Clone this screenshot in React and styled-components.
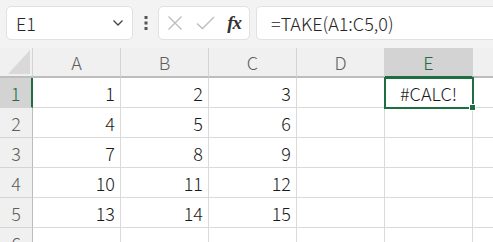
import React from 'react';
import styled, { createGlobalStyle } from 'styled-components';

const GlobalStyle = createGlobalStyle`
  html, body {
    margin: 0;
    padding: 0;
    background: #ffffff;
    font-family: "Noto Sans CJK JP", "Noto Sans", sans-serif;
    font-weight: 300;
  }
`;

const green = '#1e6e42';

const Page = styled.div`
  width: 493px;
  height: 242px;
  overflow: hidden;
  background: #f3f3f3;
`;

const Toolbar = styled.div`
  height: 48px;
  box-sizing: border-box;
  display: flex;
  align-items: flex-start;
  padding: 6px 0 0 6px;
`;

const Box = styled.div`
  height: 34px;
  box-sizing: border-box;
  background: #ffffff;
  border: 1px solid #e1e1e1;
  border-radius: 5px;
  display: flex;
  align-items: center;
`;

const NameBox = styled(Box)`
  width: 127px;
  padding: 0 8px 0 9px;
  justify-content: space-between;
  font-size: 18px;
  color: #262626;
`;

const Dots = styled.div`
  width: 25px;
  display: flex;
  justify-content: center;
  align-items: center;
  height: 34px;
`;

const IconBox = styled(Box)`
  width: 92px;
  padding: 0 6px 0 8px;
  justify-content: space-between;
`;

const Fx = styled.span`
  font-family: "Liberation Serif", "DejaVu Serif", serif;
  font-style: italic;
  font-weight: bold;
  font-size: 19px;
  color: #333;
  letter-spacing: -1px;
  margin-right: 2px;
`;

const FormulaBox = styled(Box)`
  flex: 1;
  margin-left: 6px;
  border-right: none;
  border-radius: 5px 0 0 5px;
  padding-left: 14px;
  font-size: 18px;
  color: #262626;
`;

const Sheet = styled.div`
  display: grid;
  grid-template-columns: 33px repeat(6, 88px);
  grid-auto-rows: 30px;
  background: #ffffff;
`;

const Cell = styled.div`
  box-sizing: border-box;
  border-right: 1px solid #dadada;
  border-bottom: 1px solid #dadada;
  display: flex;
  align-items: center;
  justify-content: flex-end;
  padding-right: 5px;
  font-size: 18px;
  color: #1a1a1a;
`;

const Selected = styled(Cell)`
  position: relative;
  justify-content: center;
  padding: 0;
  outline: 2px solid ${green};
  outline-offset: -1px;
  z-index: 1;

  &::after {
    content: '';
    position: absolute;
    right: -4px;
    bottom: -4px;
    width: 5px;
    height: 5px;
    background: ${green};
    border: 1px solid #fff;
  }
`;

const ColHead = styled.div`
  box-sizing: border-box;
  background: ${(p) => (p.$active ? '#d3d3d3' : '#f0f0f0')};
  border-right: 1px solid #d4d4d4;
  border-bottom: ${(p) => (p.$active ? `2px solid ${green}` : '2px solid #bdbdbd')};
  color: ${(p) => (p.$active ? green : '#5e5e5e')};
  display: flex;
  align-items: center;
  justify-content: center;
  font-size: 18px;
`;

const RowHead = styled.div`
  box-sizing: border-box;
  background: ${(p) => (p.$active ? '#d3d3d3' : '#f0f0f0')};
  border-right: ${(p) => (p.$active ? `2px solid ${green}` : '1px solid #bdbdbd')};
  border-bottom: 1px solid #d4d4d4;
  color: ${(p) => (p.$active ? green : '#5e5e5e')};
  display: flex;
  align-items: center;
  justify-content: center;
  font-size: 18px;
`;

const Corner = styled.div`
  box-sizing: border-box;
  background: #f0f0f0;
  border-right: 1px solid #d4d4d4;
  border-bottom: 2px solid #bdbdbd;
  display: flex;
  align-items: flex-end;
  justify-content: flex-end;
  padding: 0 2px 2px 0;
`;

const cols = ['A', 'B', 'C', 'D', 'E', ''];
const data = [
  [1, 2, 3],
  [4, 5, 6],
  [7, 8, 9],
  [10, 11, 12],
  [13, 14, 15],
  [],
];

export default function App() {
  return (
    <>
      <GlobalStyle />
      <Page>
        <Toolbar>
          <NameBox>
            <span>E1</span>
            <svg width="12" height="8" viewBox="0 0 12 8">
              <path d="M1.5 1.5 L6 6 L10.5 1.5" fill="none" stroke="#444" strokeWidth="1.3" />
            </svg>
          </NameBox>
          <Dots>
            <svg width="4" height="14" viewBox="0 0 4 14">
              <rect x="0.5" y="0" width="3" height="3" fill="#555" />
              <rect x="0.5" y="5.5" width="3" height="3" fill="#555" />
              <rect x="0.5" y="11" width="3" height="3" fill="#555" />
            </svg>
          </Dots>
          <IconBox>
            <svg width="16" height="16" viewBox="0 0 16 16">
              <path d="M1.5 1.5 L14.5 14.5 M14.5 1.5 L1.5 14.5" stroke="#bdbdbd" strokeWidth="1.4" />
            </svg>
            <svg width="19" height="14" viewBox="0 0 19 14">
              <path d="M1 7.5 L6.5 12.5 L18 1" fill="none" stroke="#bdbdbd" strokeWidth="1.4" />
            </svg>
            <Fx>fx</Fx>
          </IconBox>
          <FormulaBox>=TAKE(A1:C5,0)</FormulaBox>
        </Toolbar>
        <Sheet>
          <Corner>
            <svg width="22" height="24" viewBox="0 0 22 24">
              <path d="M22 0 L22 24 L0 24 Z" fill="#d9d9d9" />
            </svg>
          </Corner>
          {cols.map((c, i) => (
            <ColHead key={i} $active={c === 'E'}>{c}</ColHead>
          ))}
          {data.map((row, r) => (
            <React.Fragment key={r}>
              <RowHead $active={r === 0}>{r + 1}</RowHead>
              {cols.map((c, i) =>
                r === 0 && c === 'E' ? (
                  <Selected key={i}>#CALC!</Selected>
                ) : (
                  <Cell key={i}>{row[i] ?? ''}</Cell>
                )
              )}
            </React.Fragment>
          ))}
        </Sheet>
      </Page>
    </>
  );
}
